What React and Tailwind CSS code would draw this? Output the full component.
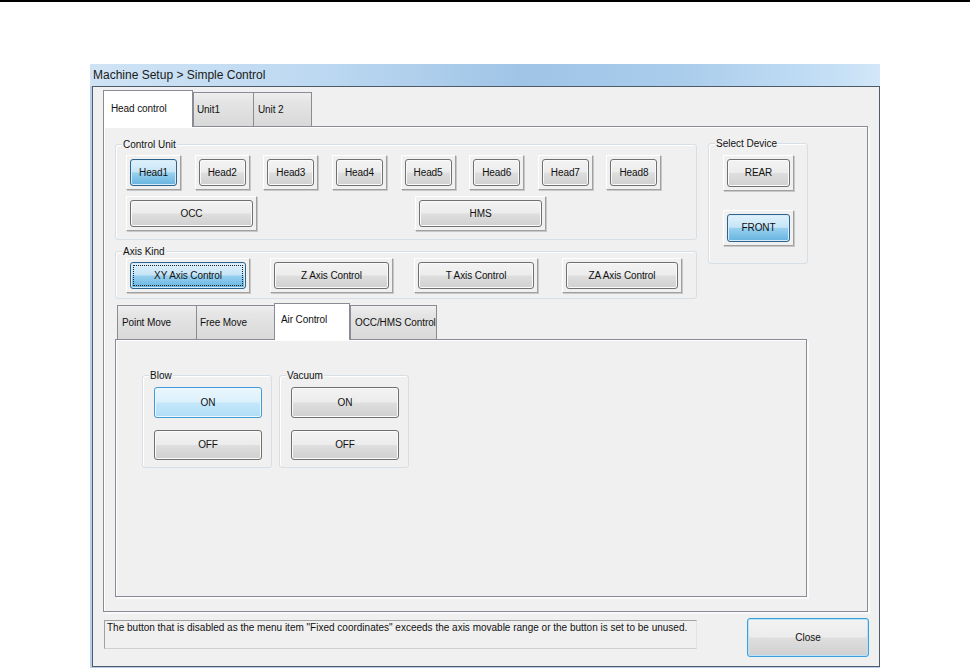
import React from "react";

const GRAY_BTN =
  "bg-[linear-gradient(to_bottom,#f3f3f3_0%,#ececec_48%,#dedede_52%,#d0d0d0_100%)] border border-[#707070] rounded-[3px] shadow-[inset_0_0_0_1px_#fafafa]";
const BLUE_BTN =
  "bg-[linear-gradient(to_bottom,#e0f1fb_0%,#c6e5f7_47%,#97d0ef_52%,#66b4e0_100%)] border border-[#2c628b] rounded-[3px] shadow-[inset_0_0_0_1px_#d6ecf9]";
const HOVER_BTN =
  "bg-[linear-gradient(to_bottom,#eaf6fd_0%,#dcf1fc_48%,#c4e7fb_52%,#b0ddf6_100%)] border border-[#3c9ad6] rounded-[3px] shadow-[inset_0_0_0_1px_#f2fafe]";

function Btn({ kind = "gray", children, className = "", focus = false }) {
  const base = kind === "blue" ? BLUE_BTN : kind === "hover" ? HOVER_BTN : GRAY_BTN;
  return (
    <div
      className={`${base} ${className} relative flex items-center justify-center text-[10px] leading-[12px] text-[#111] tracking-[-0.1px] whitespace-nowrap`}
    >
      {focus && (
        <div className="absolute inset-[2px] border border-dotted border-[#222]" />
      )}
      <span className="relative">{children}</span>
    </div>
  );
}

function Framed({ w, h, kind, children, focus }) {
  return (
    <div
      className="box-border border-t border-l border-t-white border-l-white border-r border-b border-r-[#a0a0a0] border-b-[#a0a0a0] p-[3px] shadow-[1px_1px_0_#c8c8c8] shrink-0"
      style={{ width: w, height: h }}
    >
      <Btn kind={kind} focus={focus} className="w-full h-full">
        {children}
      </Btn>
    </div>
  );
}

function Group({ label, className = "", children }) {
  return (
    <div
      className={`relative box-border border border-[#d5dfe5] rounded-[3px] shadow-[inset_1px_1px_0_#ffffff] ${className}`}
    >
      <div className="absolute -top-[7px] left-[6px] bg-[#f0f0f0] px-[1px] text-[10px] leading-[13px] text-[#111] whitespace-nowrap">
        {label}
      </div>
      {children}
    </div>
  );
}

function Tab({ selected, children, w, pl, pt }) {
  if (selected) {
    return (
      <div
        className="relative z-10 h-[37px] bg-white border border-b-0 border-[#898c95] text-[10px] leading-[12px] text-[#111] box-border shrink-0 whitespace-nowrap tracking-[-0.1px]"
        style={{ width: w, paddingLeft: pl, paddingTop: pt }}
      >
        {children}
      </div>
    );
  }
  return (
    <div
      className="mt-[2px] h-[34px] -mr-[1px] bg-[linear-gradient(to_bottom,#efefef_0%,#e5e5e5_25%,#d9d9d9_100%)] border border-b-0 border-[#898c95] text-[10px] leading-[12px] text-[#111] box-border shrink-0 whitespace-nowrap overflow-hidden tracking-[-0.1px]"
      style={{ width: w, paddingLeft: pl, paddingTop: pt }}
    >
      {children}
    </div>
  );
}

export default function App() {
  const heads = ["Head1", "Head2", "Head3", "Head4", "Head5", "Head6", "Head7", "Head8"];
  return (
    <div className="w-[970px] h-[668px] bg-white overflow-hidden font-['Liberation_Sans',Arial,sans-serif] text-black">
      <div className="h-[2px] bg-black" />
      <div className="ml-[90px] mt-[62px] w-[790px] h-[604px] flex flex-col">
        {/* title bar */}
        <div className="h-[22px] shrink-0 pl-[3px] flex items-center text-[12px] text-[#1a1a1a] bg-[linear-gradient(to_right,#cfe3f5_0%,#bcd8f1_30%,#9fc4e6_55%,#aacdec_75%,#c6e0f6_95%,#d3e7f8_100%)]">
          Machine Setup &gt; Simple Control
        </div>
        {/* body */}
        <div className="flex-1 bg-[#b7cfe8] pl-[2px] pb-[1px] flex">
          <div className="flex-1 box-border border border-[#4f5b68] bg-[#f0f0f0] flex flex-col">
            {/* main tabs */}
            <div className="ml-[10px] mt-[3px] h-[36px] flex items-start">
              <Tab selected w={90} pl={7} pt={12}>
                Head control
              </Tab>
              <Tab w={61} pl={3} pt={11}>
                Unit1
              </Tab>
              <Tab w={59} pl={4} pt={11}>
                Unit 2
              </Tab>
            </div>
            {/* main panel */}
            <div className="ml-[10px] w-[765px] h-[486px] shrink-0 box-border border border-[#898c95] bg-[#f0f0f0] shadow-[inset_1px_1px_0_#ffffff,2px_2px_0_#f9f9f9]">
              <div className="pt-[16px] pl-[11px] flex items-start">
                {/* left column */}
                <div className="mt-[1px] w-[582px] shrink-0">
                  <Group label="Control Unit" className="h-[96px] pt-[10px] pl-[10px]">
                    <div className="flex gap-[13.65px]">
                      {heads.map((h, i) => (
                        <Framed key={h} w={55} h={35} kind={i === 0 ? "blue" : "gray"}>
                          {h}
                        </Framed>
                      ))}
                    </div>
                    <div className="flex mt-[6px]">
                      <Framed w={131} h={35}>
                        OCC
                      </Framed>
                      <div className="ml-[158px]">
                        <Framed w={131} h={35}>
                          HMS
                        </Framed>
                      </div>
                    </div>
                  </Group>
                  <Group label="Axis Kind" className="mt-[11px] h-[48px] pt-[6px] pl-[10px] flex items-start">
                    <Framed w={124} h={35} kind="blue" focus>
                      XY Axis Control
                    </Framed>
                    <div className="ml-[20px]">
                      <Framed w={123} h={35}>
                        Z Axis Control
                      </Framed>
                    </div>
                    <div className="ml-[21px]">
                      <Framed w={124} h={35}>
                        T Axis Control
                      </Framed>
                    </div>
                    <div className="ml-[24px]">
                      <Framed w={120} h={35}>
                        ZA Axis Control
                      </Framed>
                    </div>
                  </Group>
                </div>
                {/* right column */}
                <Group label="Select Device" className="ml-[11px] w-[100px] h-[121px] pt-[11px] pl-[14px]">
                  <Framed w={71} h={36}>
                    REAR
                  </Framed>
                  <div className="mt-[19px]">
                    <Framed w={71} h={36} kind="blue">
                      FRONT
                    </Framed>
                  </div>
                </Group>
              </div>
              {/* sub tabs */}
              <div className="ml-[11px] mt-[4px]">
                <div className="pl-[2px] h-[36px] flex items-start">
                  <Tab w={80} pl={4} pt={11}>
                    Point Move
                  </Tab>
                  <Tab w={79} pl={3} pt={11}>
                    Free Move
                  </Tab>
                  <Tab selected w={76} pl={6} pt={10}>
                    Air Control
                  </Tab>
                  <Tab w={87} pl={4} pt={11}>
                    OCC/HMS Control
                  </Tab>
                </div>
                <div className="w-[692px] h-[258px] box-border border border-[#898c95] bg-[#f0f0f0] shadow-[inset_1px_1px_0_#ffffff,2px_2px_0_#fbfbfb] pt-[35px] pl-[26px] flex gap-[7px] items-start">
                  <Group label="Blow" className="w-[130px] h-[93px] pt-[11px] pl-[11px]">
                    <Btn kind="hover" className="w-[108px] h-[31px]">
                      ON
                    </Btn>
                    <Btn className="w-[108px] h-[30px] mt-[12px]">OFF</Btn>
                  </Group>
                  <Group label="Vacuum" className="w-[130px] h-[93px] pt-[11px] pl-[11px]">
                    <Btn className="w-[108px] h-[31px]">ON</Btn>
                    <Btn className="w-[108px] h-[30px] mt-[12px]">OFF</Btn>
                  </Group>
                </div>
              </div>
            </div>
            {/* bottom row */}
            <div className="ml-[11px] mt-[6px] flex items-start">
              <div className="mt-[2px] w-[593px] h-[29px] box-border border-t border-l border-t-[#a0a0a0] border-l-[#a0a0a0] border-r border-b border-r-[#e3e3e3] border-b-[#d0d0d0] pl-[2px] pt-[1px] text-[10px] leading-[12px] text-[#111] whitespace-nowrap overflow-hidden">
                The button that is disabled as the menu item "Fixed coordinates" exceeds the axis movable range or the button is set to be unused.
              </div>
              <div className="ml-[50px] w-[122px] h-[39px] box-border border border-[#3a9fdc] rounded-[3px] shadow-[inset_0_0_0_1px_#b8e3f8] bg-[linear-gradient(to_bottom,#f3f3f3_0%,#ececec_48%,#dedede_52%,#d0d0d0_100%)] flex items-center justify-center text-[10px] text-[#111]">
                Close
              </div>
            </div>
          </div>
        </div>
      </div>
    </div>
  );
}
